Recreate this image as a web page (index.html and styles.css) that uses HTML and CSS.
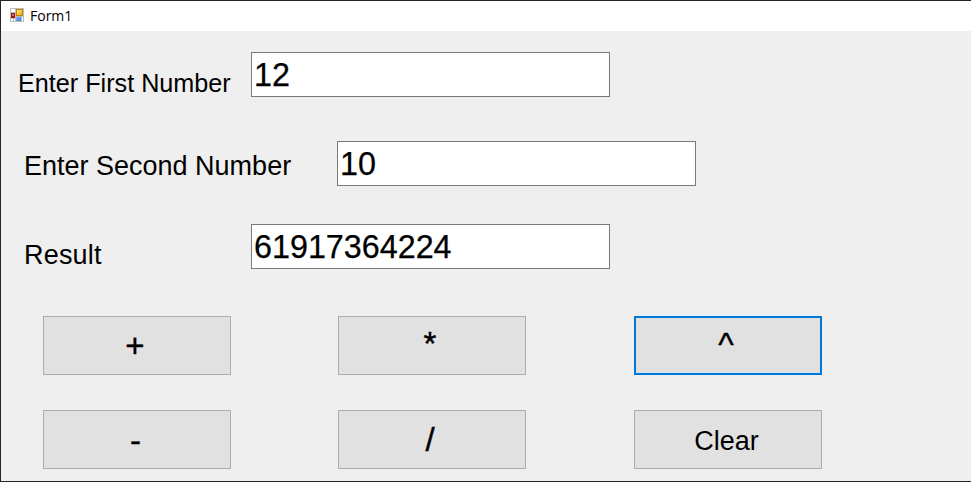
FILE: index.html
```html
<!DOCTYPE html>
<html lang="en">
<head>
<meta charset="utf-8">
<title>Form1</title>
<link rel="stylesheet" href="styles.css">
</head>
<body>
<div class="window">
  <header class="titlebar">
    <svg class="app-icon" width="14" height="14" viewBox="0 0 14 14" shape-rendering="crispEdges">
      <defs>
        <linearGradient id="gold" x1="0" y1="0" x2="1" y2="1"><stop offset="0" stop-color="#ffe680"/><stop offset="1" stop-color="#efa900"/></linearGradient>
        <linearGradient id="blue" x1="0" y1="0" x2="1" y2="1"><stop offset="0" stop-color="#86b8ff"/><stop offset="1" stop-color="#3c79e0"/></linearGradient>
      </defs>
      <rect width="14" height="14" fill="#bdbdbd"/>
      <path d="M1 1h4v3H1zM1 11h2v2H1zM4 11h1v2H4zM12 9h1v4h-1z" fill="#fff"/>
      <rect x="6" y="1" width="7" height="7" fill="#b8860b"/>
      <rect x="7" y="2" width="5" height="5" fill="url(#gold)"/>
      <rect x="1" y="5" width="4" height="5" fill="#a51414"/>
      <rect x="2" y="6" width="2" height="2" fill="#e06a5c"/>
      <rect x="6" y="9" width="5" height="4" fill="url(#blue)"/>
    </svg>
    <span class="title">Form1</span>
  </header>
  <main class="form">
    <div class="row row-first">
      <label for="first">Enter First Number</label>
      <input id="first" type="text" value="12">
    </div>
    <div class="row row-second">
      <label for="second">Enter Second Number</label>
      <input id="second" type="text" value="10">
    </div>
    <div class="row row-result">
      <label for="result">Result</label>
      <input id="result" type="text" value="61917364224">
    </div>
    <div class="buttons">
      <button>+</button>
      <button class="times">*</button>
      <button class="power active">^</button>
      <button class="minus">-</button>
      <button>/</button>
      <button class="clear">Clear</button>
    </div>
  </main>
</div>
</body>
</html>
```
FILE: styles.css
```css
* { box-sizing: border-box; }

body {
  margin: 0;
  overflow: hidden;
  font-family: "Liberation Sans", Arial, sans-serif;
  color: #000;
}

.window {
  height: 482px;
  display: flex;
  flex-direction: column;
  background: #efefef;
  border: 1px solid #25242a;
  border-right: 0;
}

.titlebar {
  flex: none;
  height: 30px;
  padding-left: 9px;
  display: flex;
  align-items: center;
  background: #fff;
}

.app-icon { margin-top: -2px; }

.title {
  margin: -1px 0 0 6px;
  font: 14px/20px "Open Sans", "Noto Sans", sans-serif;
}

.form { padding-top: 21px; }

.row {
  display: flex;
  height: 45px;
}

.row label {
  flex: none;
  height: 45px;
  margin-left: 23px;
  font-size: 27px;
  line-height: 30px;
  white-space: nowrap;
}

.row input {
  width: 359px;
  height: 45px;
  padding: 1px 3px 0 2px;
  border: 1px solid #7a7a7a;
  border-radius: 0;
  outline: 0;
  background: #fff;
  color: #000;
  font: 32.3px/42px "Liberation Sans", Arial, sans-serif;
  -webkit-text-stroke: 0.25px #000;
}

.row-first label {
  width: 233px;
  margin-left: 17px;
  padding-top: 16px;
  font-size: 25.2px;
}

.row-second { margin-top: 44px; }
.row-second label { width: 313px; padding-top: 10px; }

.row-result { margin-top: 38px; }
.row-result label { width: 227px; padding-top: 16px; letter-spacing: 0.2px; }

.buttons {
  display: grid;
  grid-template-columns: 295px 296px 188px;
  grid-auto-rows: 59px;
  row-gap: 35px;
  margin: 47px 0 0 42px;
}

.buttons button {
  width: 188px;
  padding: 0 4px 0 0;
  border: 1px solid #adadad;
  border-radius: 0;
  background: #e1e1e1;
  color: #000;
  font: 33px/38px "Liberation Sans", Arial, sans-serif;
  -webkit-text-stroke: 0.4px #000;
}

.buttons .active { border: 2px solid #0078d7; }
.buttons .times { padding-bottom: 4px; }
.buttons .power { padding-bottom: 2px; }
.buttons .minus { padding-top: 3px; padding-right: 3px; }

.buttons .clear {
  padding: 2px 3px 0 0;
  font-size: 27px;
  -webkit-text-stroke: 0;
}
```
